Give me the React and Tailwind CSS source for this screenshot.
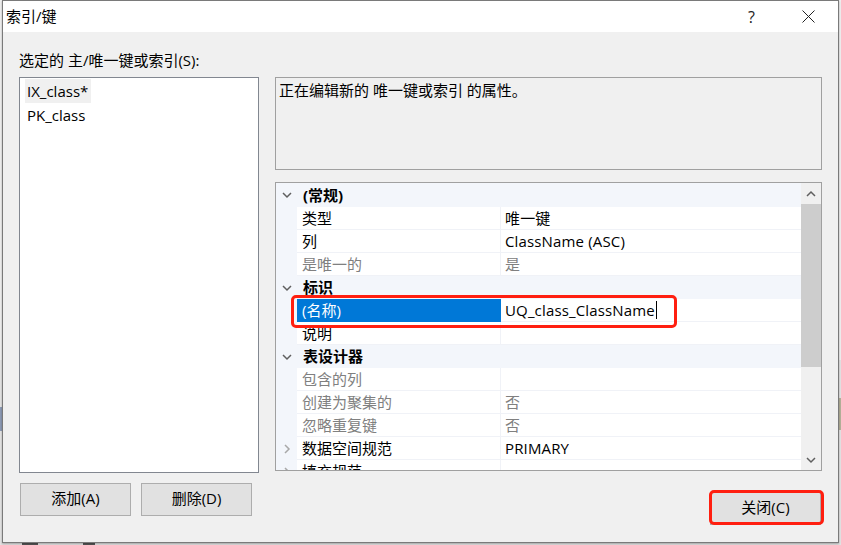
const font = { fontFamily: '"Open Sans", "Noto Sans CJK SC", sans-serif' };

const rows = [
  { type: 'group', name: '(常规)', first: true },
  { name: '类型', value: '唯一键' },
  { name: '列', value: 'ClassName (ASC)' },
  { name: '是唯一的', value: '是', muted: true },
  { type: 'group', name: '标识' },
  { name: '(名称)', value: 'UQ_class_ClassName', selected: true },
  { name: '说明', value: '' },
  { type: 'group', name: '表设计器' },
  { name: '包含的列', value: '', muted: true },
  { name: '创建为聚集的', value: '否', muted: true },
  { name: '忽略重复键', value: '否', muted: true },
  { name: '数据空间规范', value: 'PRIMARY', expand: true },
  { name: '填充规范', value: '', expand: true },
];

const Chevron = ({ dir }) => (
  <svg width="10" height="10" viewBox="0 0 10 10" fill="none" stroke="#5f5f5f" strokeWidth="1.5">
    <path d={dir === 'down' ? 'M1 3 L5 7 L9 3' : 'M1 7 L5 3 L9 7'} />
  </svg>
);

const GridRow = ({ row }) => {
  if (row.type === 'group') {
    return (
      <div className={`flex shrink-0 items-center bg-[#f3f6fb] ${row.first ? 'h-[24px]' : 'h-[23px]'}`}>
        <div className="flex w-[21px] justify-center">
          <Chevron dir="down" />
        </div>
        <span className="pl-[6px] font-bold text-black">{row.name}</span>
      </div>
    );
  }
  return (
    <div className="flex h-[23px] shrink-0 items-center">
      <div className="flex h-full w-[21px] shrink-0 items-center justify-center bg-[#f3f6fb]">
        {row.expand && (
          <svg width="8" height="10" viewBox="0 0 8 10" fill="none" stroke="#a8a8a8" strokeWidth="1.5">
            <path d="M2 1 L6 5 L2 9" />
          </svg>
        )}
      </div>
      <div
        className={`flex h-full w-[204px] shrink-0 items-center border-b pl-[5px] ${
          row.selected
            ? 'border-[#0078d7] bg-[#0078d7] text-white'
            : `border-r border-[#f0f2f7] ${row.muted ? 'text-[#808080]' : 'text-black'}`
        }`}
      >
        {row.name}
      </div>
      <div
        className={`flex h-full flex-1 items-center border-b border-[#f0f2f7] pl-[4px] tracking-[0.15px] ${
          row.muted ? 'text-[#808080]' : 'text-black'
        }`}
      >
        {row.value}
        {row.selected && <span className="ml-px inline-block h-[18px] w-px bg-black" />}
      </div>
    </div>
  );
};

const Button = ({ children, className }) => (
  <button className={`flex h-[33px] w-[111px] items-center justify-center border border-[#adadad] bg-[#e1e1e1] pb-[3px] text-black ${className || ''}`}>
    {children}
  </button>
);

export default function App() {
  return (
    <div className="relative h-[545px] w-[841px] overflow-hidden bg-[#f0f0f0] text-[15px] leading-none" style={font}>
      {/* window behind the dialog, only its edges show */}
      <div className="absolute inset-x-0 top-[360px] h-[185px] bg-[#e4e4e4]" />
      <div className="absolute left-0 top-[407px] h-[24px] w-[2px] bg-[#8d9bb5]" />
      <div className="absolute right-0 top-[398px] h-[32px] w-[2px] bg-[#b5b29a]" />
      <div className="absolute left-[22px] top-[543px] h-[2px] w-[16px] bg-[#555]" />
      <div className="absolute left-[83px] top-[543px] h-[2px] w-[12px] bg-[#555]" />

      <div className="absolute left-[2px] top-0 flex h-[543px] w-[837px] flex-col border border-[#7a7a7a] bg-[#f0f0f0] shadow-[0_1px_2px_rgba(0,0,0,0.3)]">
        {/* title bar */}
        <div className="flex h-[31px] shrink-0 items-center bg-white">
          <span className="pl-[3px] text-black">索引/键</span>
          <span className="ml-auto text-[16px] text-[#222]">?</span>
          <svg className="ml-[47px] mr-[23px]" width="13" height="13" viewBox="0 0 13 13" fill="none" stroke="#222" strokeWidth="1">
            <path d="M0.5 0.5 L12.5 12.5 M12.5 0.5 L0.5 12.5" />
          </svg>
        </div>

        <div className="flex flex-1 flex-col px-[16px]">
          <div className="flex h-[45px] items-center pt-[12px] text-black">选定的 主/唯一键或索引(S):</div>

          <div className="flex gap-[16px]">
            {/* left column */}
            <div className="flex w-[240px] shrink-0 flex-col">
              <div className="h-[396px] border border-[#828790] bg-white pl-[5px] pt-px text-black">
                <div className="flex h-[24px] w-[66px] items-center bg-[#f0f0f0] pl-[2px]">IX_class*</div>
                <div className="flex h-[24px] items-center pl-[2px]">PK_class</div>
              </div>
              <div className="mt-[10px] flex gap-[10px] pl-px">
                <Button>添加(A)</Button>
                <Button>删除(D)</Button>
              </div>
            </div>

            {/* right column */}
            <div className="flex w-[547px] shrink-0 flex-col">
              <div className="h-[93px] border border-[#a0a0a0] bg-[#f0f0f0] px-[3px] pt-[5px] text-black">正在编辑新的 唯一键或索引 的属性。</div>
              <div className="mt-[12px] flex h-[289px] border border-[#a0a0a0] bg-white">
                <div className="flex min-w-0 flex-1 flex-col overflow-hidden">
                  {rows.map((row) => (
                    <GridRow key={row.name} row={row} />
                  ))}
                </div>
                <div className="flex w-[20px] shrink-0 flex-col bg-[#f0f0f0]">
                  <div className="flex h-[21px] items-center justify-center">
                    <Chevron dir="up" />
                  </div>
                  <div className="flex-1">
                    <div className="h-[163px] bg-[#cdcdcd]" />
                  </div>
                  <div className="flex h-[21px] items-center justify-center">
                    <Chevron dir="down" />
                  </div>
                </div>
              </div>
              <div className="mt-[21px] flex justify-end pr-px">
                <Button className="h-[29px] w-[109px]">关闭(C)</Button>
              </div>
            </div>
          </div>
        </div>
      </div>

      {/* red annotation marks */}
      <div className="absolute left-[291px] top-[295px] h-[33px] w-[386px] rounded-[5px] border-[3px] border-[#ff1f10]" />
      <div className="absolute left-[709px] top-[490px] h-[35px] w-[115px] rounded-[5px] border-[3px] border-[#ff1f10]" />
    </div>
  );
}
